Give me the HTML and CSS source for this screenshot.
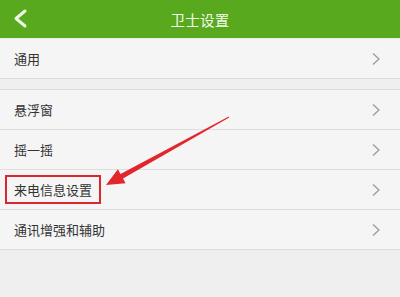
FILE: index.html
```html
<!DOCTYPE html>
<html lang="zh-CN">
<head>
  <meta charset="UTF-8" />
  <meta name="viewport" content="width=device-width, initial-scale=1.0"/>
  <title>卫士设置</title>
  <link rel="stylesheet" href="styles.css">
</head>
<body>
  <div class="header">
    <div class="back">
      <svg width="40" height="38" viewBox="0 0 40 38"><polyline points="25,11 16,18.5 25,26" fill="none" stroke="#eef7e6" stroke-width="3" stroke-linecap="round" stroke-linejoin="round"/></svg>
    </div>
    <div class="title">卫士设置</div>
    <div class="back"></div>
  </div>

  <div class="group">
    <div class="row"><span class="label">通用</span><span class="chev"></span></div>
  </div>

  <div class="group">
    <div class="row"><span class="label">悬浮窗</span><span class="chev"></span></div>
    <div class="row"><span class="label">摇一摇</span><span class="chev"></span></div>
    <div class="row"><span class="label marked">来电信息设置</span><span class="chev"></span></div>
    <div class="row"><span class="label">通讯增强和辅助</span><span class="chev"></span></div>
  </div>

  <!-- 标注箭头 -->
  <svg class="pointer" width="400" height="297" viewBox="0 0 400 297">
    <polygon points="106,185 125.6,183.3 123,178.5 229.2,117.4 228.8,116.6 120.5,174.1 117.9,169.3" fill="#e3262c"/>
  </svg>

  <script>
    document.querySelectorAll('.chev').forEach(function (el) {
      el.innerHTML = '<svg width="10" height="14" viewBox="0 0 10 14"><polyline points="2,1.5 8,7 2,12.5" fill="none" stroke="#9b9b9b" stroke-width="1.3"/></svg>';
    });
  </script>
</body>
</html>
```

FILE: styles.css
```css
body {
  margin: 0;
  font-family: "Noto Sans CJK SC", "Noto Sans", sans-serif;
  background: #efefef;
  color: #333;
  position: relative;
  height: 297px;
  overflow: hidden;
}

.header {
  display: flex;
  align-items: center;
  height: 38px;
  background-color: #58a91d;
  border-bottom: 1px solid #e6efdc;
}

.back {
  width: 40px;
  height: 38px;
}

.back svg {
  display: block;
}

.title {
  flex-grow: 1;
  text-align: center;
  color: #f4faee;
  font-size: 14.5px;
  letter-spacing: 0.3px;
}

.group {
  background-color: #f5f5f5;
  border-bottom: 1px solid #dcdcdc;
}

.group + .group {
  margin-top: 10px;
  border-top: 1px solid #dcdcdc;
}

.row {
  display: flex;
  align-items: center;
  justify-content: space-between;
  height: 39px;
  padding: 0 14px;
  border-bottom: 1px solid #dedede;
  font-size: 13px;
}

.row:last-child {
  border-bottom: none;
}

.marked {
  margin-left: -9px;
  padding: 3px 7px;
  border: 2px solid #d8272d;
}

.chev {
  width: 10px;
  height: 14px;
  margin-right: 5px;
}

.chev svg {
  display: block;
}

.pointer {
  position: absolute;
  top: 0;
  left: 0;
  pointer-events: none;
}
```
